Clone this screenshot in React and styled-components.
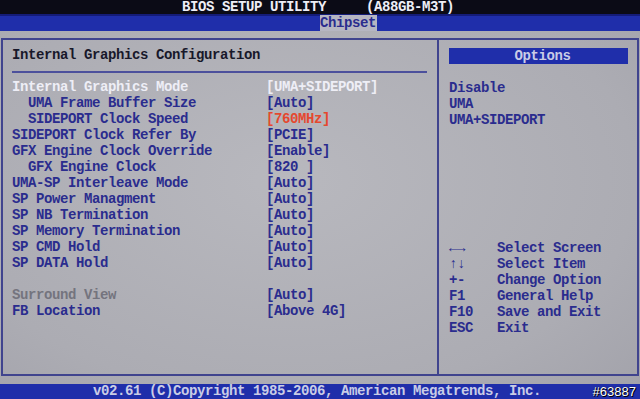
import React from "react";
import styled, { createGlobalStyle } from "styled-components";

const colors = {
  black: "#0b0b16",
  blue: "#1f2eaa",
  blueDark: "#141c78",
  grey: "#b1b1b7",
  text: "#2a2c8e",
  dark: "#18182a",
  white: "#eeeef6",
  red: "#e5482e",
  muted: "#74747e",
  border: "#40448e",
  pale: "#c9cce6",
};

const Global = createGlobalStyle`
  html, body {
    margin: 0;
    padding: 0;
    background: ${colors.grey};
  }
  body {
    font-family: "Liberation Mono", "DejaVu Sans Mono", monospace;
  }
`;

const Screen = styled.div`
  width: 640px;
  height: 399px;
  overflow: hidden;
  display: flex;
  flex-direction: column;
  background: radial-gradient(ellipse at 45% 45%, #b8b8be 0%, #acacb3 70%, #a2a2aa 100%);
  font-family: "Liberation Mono", "DejaVu Sans Mono", monospace;
  font-weight: 700;
  font-size: 14px;
  letter-spacing: -0.4px;
  line-height: 16px;
`;

const TitleBar = styled.div`
  height: 14px;
  line-height: 14px;
  background: ${colors.black};
  color: ${colors.white};
  text-align: center;
  white-space: pre;
  padding-right: 4px;
`;

const TabBar = styled.div`
  height: 17px;
  display: flex;
  align-items: stretch;
  padding-left: 320px;
  background: linear-gradient(${colors.blueDark} 0 2px, ${colors.blue} 2px);
`;

const Tab = styled.div`
  background: #b6b6c2;
  color: ${colors.text};
  padding: 0 1px 0 0;
  line-height: 16px;
  margin-top: 1px;
`;

const Frame = styled.div`
  margin: 7px 1px 0 1px;
  height: 338px;
  box-sizing: border-box;
  border: 2px solid ${colors.border};
  display: grid;
  grid-template-columns: 436px 1fr;
`;

const LeftPanel = styled.div`
  border-right: 2px solid ${colors.border};
  padding: 7px 10px 0 9px;
`;

const Heading = styled.div`
  color: ${colors.dark};
`;

const Rule = styled.div`
  height: 2px;
  background: #4c509c;
  margin: 8px 0 6px;
`;

const Row = styled.div`
  display: grid;
  grid-template-columns: 254px 1fr;
  height: 16px;
  white-space: pre;
`;

const Label = styled.span`
  padding-left: ${(p) => (p.$indent ? 16 : 0)}px;
  color: ${(p) =>
    p.$state === "selected" ? colors.white : p.$state === "disabled" ? colors.muted : colors.text};
`;

const Value = styled.span`
  color: ${(p) =>
    p.$state === "selected" ? colors.white : p.$state === "active" ? colors.red : colors.text};
`;

const RightPanel = styled.div`
  padding: 8px 9px 0 10px;
  display: flex;
  flex-direction: column;
`;

const OptionsHead = styled.div`
  height: 16px;
  background: ${colors.blue};
  color: ${colors.pale};
  text-align: center;
  padding-left: 8px;
`;

const OptionList = styled.div`
  margin-top: 16px;
  color: ${colors.text};
`;

const Help = styled.div`
  margin-top: 112px;
  color: ${colors.text};
`;

const HelpRow = styled.div`
  display: grid;
  grid-template-columns: 48px 1fr;
  height: 16px;
  white-space: pre;
`;

const Footer = styled.div`
  margin-top: 8px;
  height: 15px;
  line-height: 15px;
  background: ${colors.blue};
  color: ${colors.pale};
  display: flex;
  padding-left: 93px;
  white-space: pre;
`;

const Mark = styled.span`
  margin-left: auto;
  padding-right: 4px;
  font-family: "Liberation Sans", Arial, sans-serif;
  font-size: 13px;
  font-weight: 400;
  letter-spacing: 0;
  color: #ffffff;
  text-shadow: 0 0 1px #000, 1px 1px 0 #000;
`;

const rows = [
  ["Internal Graphics Mode", "[UMA+SIDEPORT]", false, "selected"],
  ["UMA Frame Buffer Size", "[Auto]", true],
  ["SIDEPORT Clock Speed", "[760MHz]", true, "active"],
  ["SIDEPORT Clock Refer By", "[PCIE]"],
  ["GFX Engine Clock Override", "[Enable]"],
  ["GFX Engine Clock", "[820 ]", true],
  ["UMA-SP Interleave Mode", "[Auto]"],
  ["SP Power Managment", "[Auto]"],
  ["SP NB Termination", "[Auto]"],
  ["SP Memory Termination", "[Auto]"],
  ["SP CMD Hold", "[Auto]"],
  ["SP DATA Hold", "[Auto]"],
  null,
  ["Surround View", "[Auto]", false, "disabled"],
  ["FB Location", "[Above 4G]"],
];

const help = [
  ["←→", "Select Screen"],
  ["↑↓", "Select Item"],
  ["+-", "Change Option"],
  ["F1", "General Help"],
  ["F10", "Save and Exit"],
  ["ESC", "Exit"],
];

const App = () => (
  <>
    <Global />
    <Screen>
      <TitleBar>{"BIOS SETUP UTILITY     (A88GB-M3T)"}</TitleBar>
      <TabBar>
        <Tab>Chipset</Tab>
      </TabBar>
      <Frame>
        <LeftPanel>
          <Heading>Internal Graphics Configuration</Heading>
          <Rule />
          {rows.map((r, i) =>
            r ? (
              <Row key={i}>
                <Label $indent={r[2]} $state={r[3]}>
                  {r[0]}
                </Label>
                <Value $state={r[3]}>{r[1]}</Value>
              </Row>
            ) : (
              <Row key={i} />
            )
          )}
        </LeftPanel>
        <RightPanel>
          <OptionsHead>Options</OptionsHead>
          <OptionList>
            <div>Disable</div>
            <div>UMA</div>
            <div>UMA+SIDEPORT</div>
          </OptionList>
          <Help>
            {help.map(([k, t]) => (
              <HelpRow key={k}>
                <span>{k}</span>
                <span>{t}</span>
              </HelpRow>
            ))}
          </Help>
        </RightPanel>
      </Frame>
      <Footer>
        <span>v02.61 (C)Copyright 1985-2006, American Megatrends, Inc.</span>
        <Mark>#63887</Mark>
      </Footer>
    </Screen>
  </>
);

export default App;
